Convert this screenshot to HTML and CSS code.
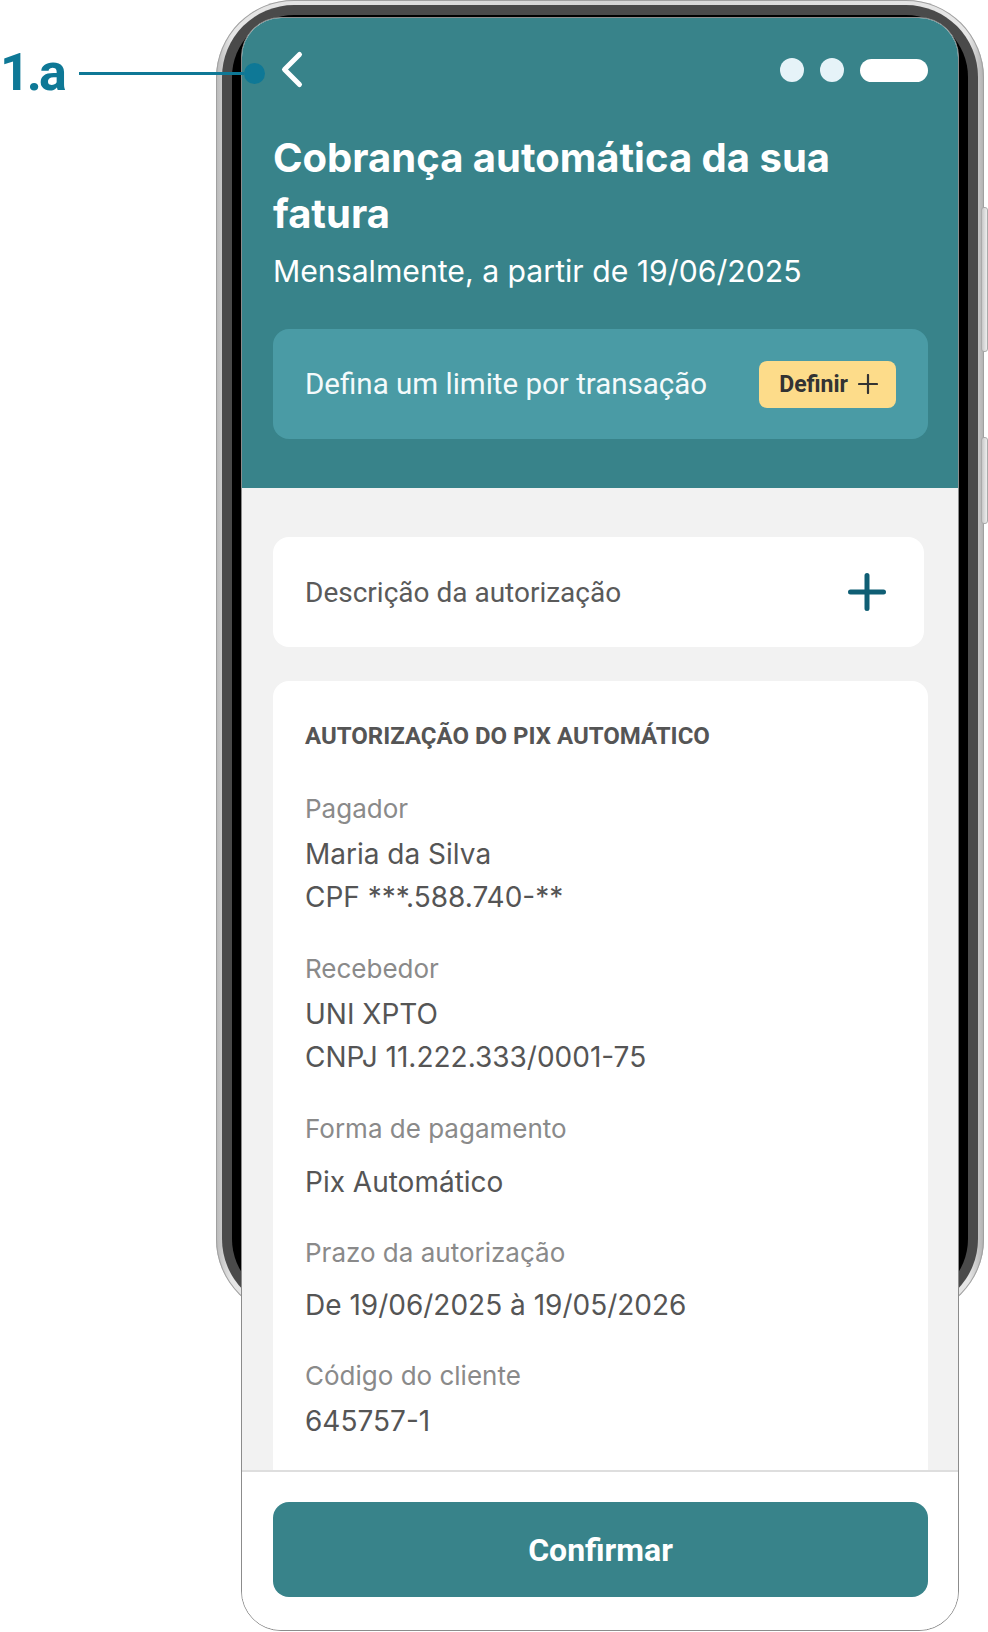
FILE: index.html
```html
<!DOCTYPE html>
<html lang="pt-BR">
<head>
    <meta charset="UTF-8">
    <meta name="viewport" content="width=device-width, initial-scale=1.0">
    <title>Cobrança automática da sua fatura</title>
    <link rel="stylesheet" href="styles.css">
</head>
<body>
    <div class="stage">
        <div class="callout">
            <span class="callout-label">1.a</span>
            <span class="callout-line"></span>
            <span class="callout-dot"></span>
        </div>

        <div class="phone-frame">
            <div class="frame-mid"><div class="frame-inner"></div></div>
            <span class="side-btn side-btn-top"></span>
            <span class="side-btn side-btn-bottom"></span>
        </div>

        <div class="screen">
            <header class="header">
                <div class="status-row">
                    <svg class="back" width="40" height="40" viewBox="0 0 40 40">
                        <path d="M26.5 4.5 L11.5 19.5 L26.5 34.5" fill="none" stroke="#fff" stroke-width="5" stroke-linecap="round" stroke-linejoin="round"/>
                    </svg>
                    <div class="status-icons">
                        <span class="status-dot"></span>
                        <span class="status-dot"></span>
                        <span class="status-pill"></span>
                    </div>
                </div>
                <h1 class="title">Cobrança automática da sua fatura</h1>
                <p class="subtitle">Mensalmente, a partir de 19/06/2025</p>
                <div class="limit-card">
                    <span>Defina um limite por transação</span>
                    <button class="btn-define">Definir
                        <svg width="20" height="20" viewBox="0 0 20 20">
                            <path d="M10 1 V19 M1 10 H19" stroke="#333" stroke-width="2.2" stroke-linecap="round"/>
                        </svg>
                    </button>
                </div>
            </header>

            <main class="content">
                <div class="card card-row">
                    <span>Descrição da autorização</span>
                    <svg width="38" height="38" viewBox="0 0 38 38">
                        <path d="M19 2.5 V35.5 M2.5 19 H35.5" stroke="#0f5e74" stroke-width="5" stroke-linecap="round"/>
                    </svg>
                </div>

                <section class="card details">
                    <h2 class="details-title">AUTORIZAÇÃO DO PIX AUTOMÁTICO</h2>
                    <div class="field">
                        <div class="field-label">Pagador</div>
                        <div class="field-value">Maria da Silva</div>
                        <div class="field-value">CPF ***.588.740-**</div>
                    </div>
                    <div class="field">
                        <div class="field-label">Recebedor</div>
                        <div class="field-value">UNI XPTO</div>
                        <div class="field-value">CNPJ 11.222.333/0001-75</div>
                    </div>
                    <div class="field field-single">
                        <div class="field-label">Forma de pagamento</div>
                        <div class="field-value">Pix Automático</div>
                    </div>
                    <div class="field field-single">
                        <div class="field-label">Prazo da autorização</div>
                        <div class="field-value">De 19/06/2025 à 19/05/2026</div>
                    </div>
                    <div class="field">
                        <div class="field-label">Código do cliente</div>
                        <div class="field-value">645757-1</div>
                    </div>
                </section>
            </main>

            <footer class="footer">
                <button class="btn-confirm">Confirmar</button>
            </footer>
        </div>
    </div>
</body>
</html>
```

FILE: styles.css
```css
body {
    margin: 0;
    background: #fff;
    font-family: Roboto, "Noto Sans", sans-serif;
}
.stage {
    position: relative;
    width: 988px;
    height: 1632px;
    overflow: hidden;
}

/* annotation */
.callout {
    position: absolute;
    left: 0;
    top: 41px;
    width: 265px;
    height: 64px;
    display: flex;
    align-items: center;
    z-index: 3;
}
.callout-label {
    font-weight: 700;
    font-size: 52px;
    line-height: 52px;
    letter-spacing: -3px;
    color: #0e7896;
    width: 79px;
}
.callout-line {
    flex: 1;
    height: 3px;
    background: #0e7896;
}
.callout-dot {
    width: 21px;
    height: 21px;
    border-radius: 50%;
    background: #0e7896;
}

/* phone */
.phone-frame {
    position: absolute;
    left: 216px;
    top: 0;
    width: 768px;
    height: 1317px;
    box-sizing: border-box;
    padding: 5px 6px 6px 6px;
    border-radius: 78px;
    background: linear-gradient(90deg, #b8b8b8, #e6e6e6 2%, #d4d4d4 50%, #e6e6e6 98%, #b0b0b0);
    box-shadow: inset 0 0 0 1px #a0a0a0;
}
.frame-mid {
    height: 100%;
    box-sizing: border-box;
    padding: 10px;
    border-radius: 72px;
    background: #4a4a4a;
}
.frame-inner {
    height: 100%;
    border-radius: 62px;
    background: #000;
}
.side-btn {
    position: absolute;
    right: -4px;
    width: 5px;
    border-radius: 3px;
    background: linear-gradient(90deg, #c8c8c8, #eee);
    border: 1px solid #aaa;
}
.side-btn-top { top: 207px; height: 143px; }
.side-btn-bottom { top: 437px; height: 85px; }

.screen {
    position: relative;
    z-index: 2;
    margin: 17px 0 0 241px;
    width: 718px;
    height: 1614px;
    box-sizing: border-box;
    border: 1px solid #8c8c8c;
    border-radius: 40px;
    overflow: hidden;
    background: #fff;
}

/* header */
.header {
    background: #38838a;
    padding: 22px 30px 49px 31px;
    height: 470px;
    box-sizing: border-box;
    color: #fff;
}
.status-row {
    height: 60px;
    display: flex;
    align-items: center;
    justify-content: space-between;
}
.status-icons {
    display: flex;
    align-items: center;
    gap: 16px;
}
.status-dot {
    width: 24px;
    height: 24px;
    border-radius: 50%;
    background: #e6f3f8;
}
.status-pill {
    width: 68px;
    height: 23px;
    border-radius: 12px;
    background: #fff;
}
.title {
    margin: 30px 0 0;
    font-family: Inter, Roboto, sans-serif;
    font-size: 40px;
    line-height: 56px;
    font-weight: 700;
}
.subtitle {
    margin: 9px 0 0;
    font-family: Inter, Roboto, sans-serif;
    font-size: 30.2px;
    line-height: 40px;
}
.limit-card {
    margin-top: 38px;
    height: 110px;
    border-radius: 16px;
    background: #4a9ba5;
    display: flex;
    align-items: center;
    justify-content: space-between;
    padding: 0 32px;
    font-size: 29.5px;
    color: #f4fafb;
}
.btn-define {
    height: 47px;
    border: none;
    border-radius: 8px;
    background: #fddc8a;
    color: #333;
    font-family: Roboto, sans-serif;
    font-weight: 700;
    font-size: 23px;
    padding: 0 18px 0 20px;
    display: flex;
    align-items: center;
    gap: 10px;
}

/* content */
.content {
    height: 982px;
    box-sizing: border-box;
    background: #f2f2f2;
    padding: 49px 30px 0 31px;
    overflow: hidden;
}
.card {
    background: #fff;
    border-radius: 16px;
}
.card-row {
    height: 110px;
    margin-right: 4px;
    display: flex;
    align-items: center;
    justify-content: space-between;
    padding: 0 38px 0 32px;
    font-size: 28px;
    color: #5a5a5a;
}
.details {
    margin-top: 34px;
    padding: 40px 32px 30px;
}
.details-title {
    margin: 0 0 38px;
    font-size: 24px;
    line-height: 30px;
    font-weight: 700;
    color: #555;
}
.field { margin-bottom: 30px; }
.field-label {
    font-family: Inter, Roboto, sans-serif;
    font-size: 26px;
    line-height: 40px;
    color: #8a8a8a;
    margin-bottom: 4px;
}
.field-single { margin-bottom: 29px; }
.field-single .field-label { margin-bottom: 11.5px; }
.field-value {
    font-family: Inter, Roboto, sans-serif;
    font-size: 28px;
    line-height: 43px;
    color: #555;
}

/* footer */
.footer {
    border-top: 2px solid #dedede;
    padding: 30px 30px 33px 31px;
    background: #fff;
}
.btn-confirm {
    width: 100%;
    height: 95px;
    border: none;
    border-radius: 16px;
    background: #38838a;
    color: #fff;
    font-family: Roboto, sans-serif;
    font-weight: 700;
    font-size: 32px;
}
```
